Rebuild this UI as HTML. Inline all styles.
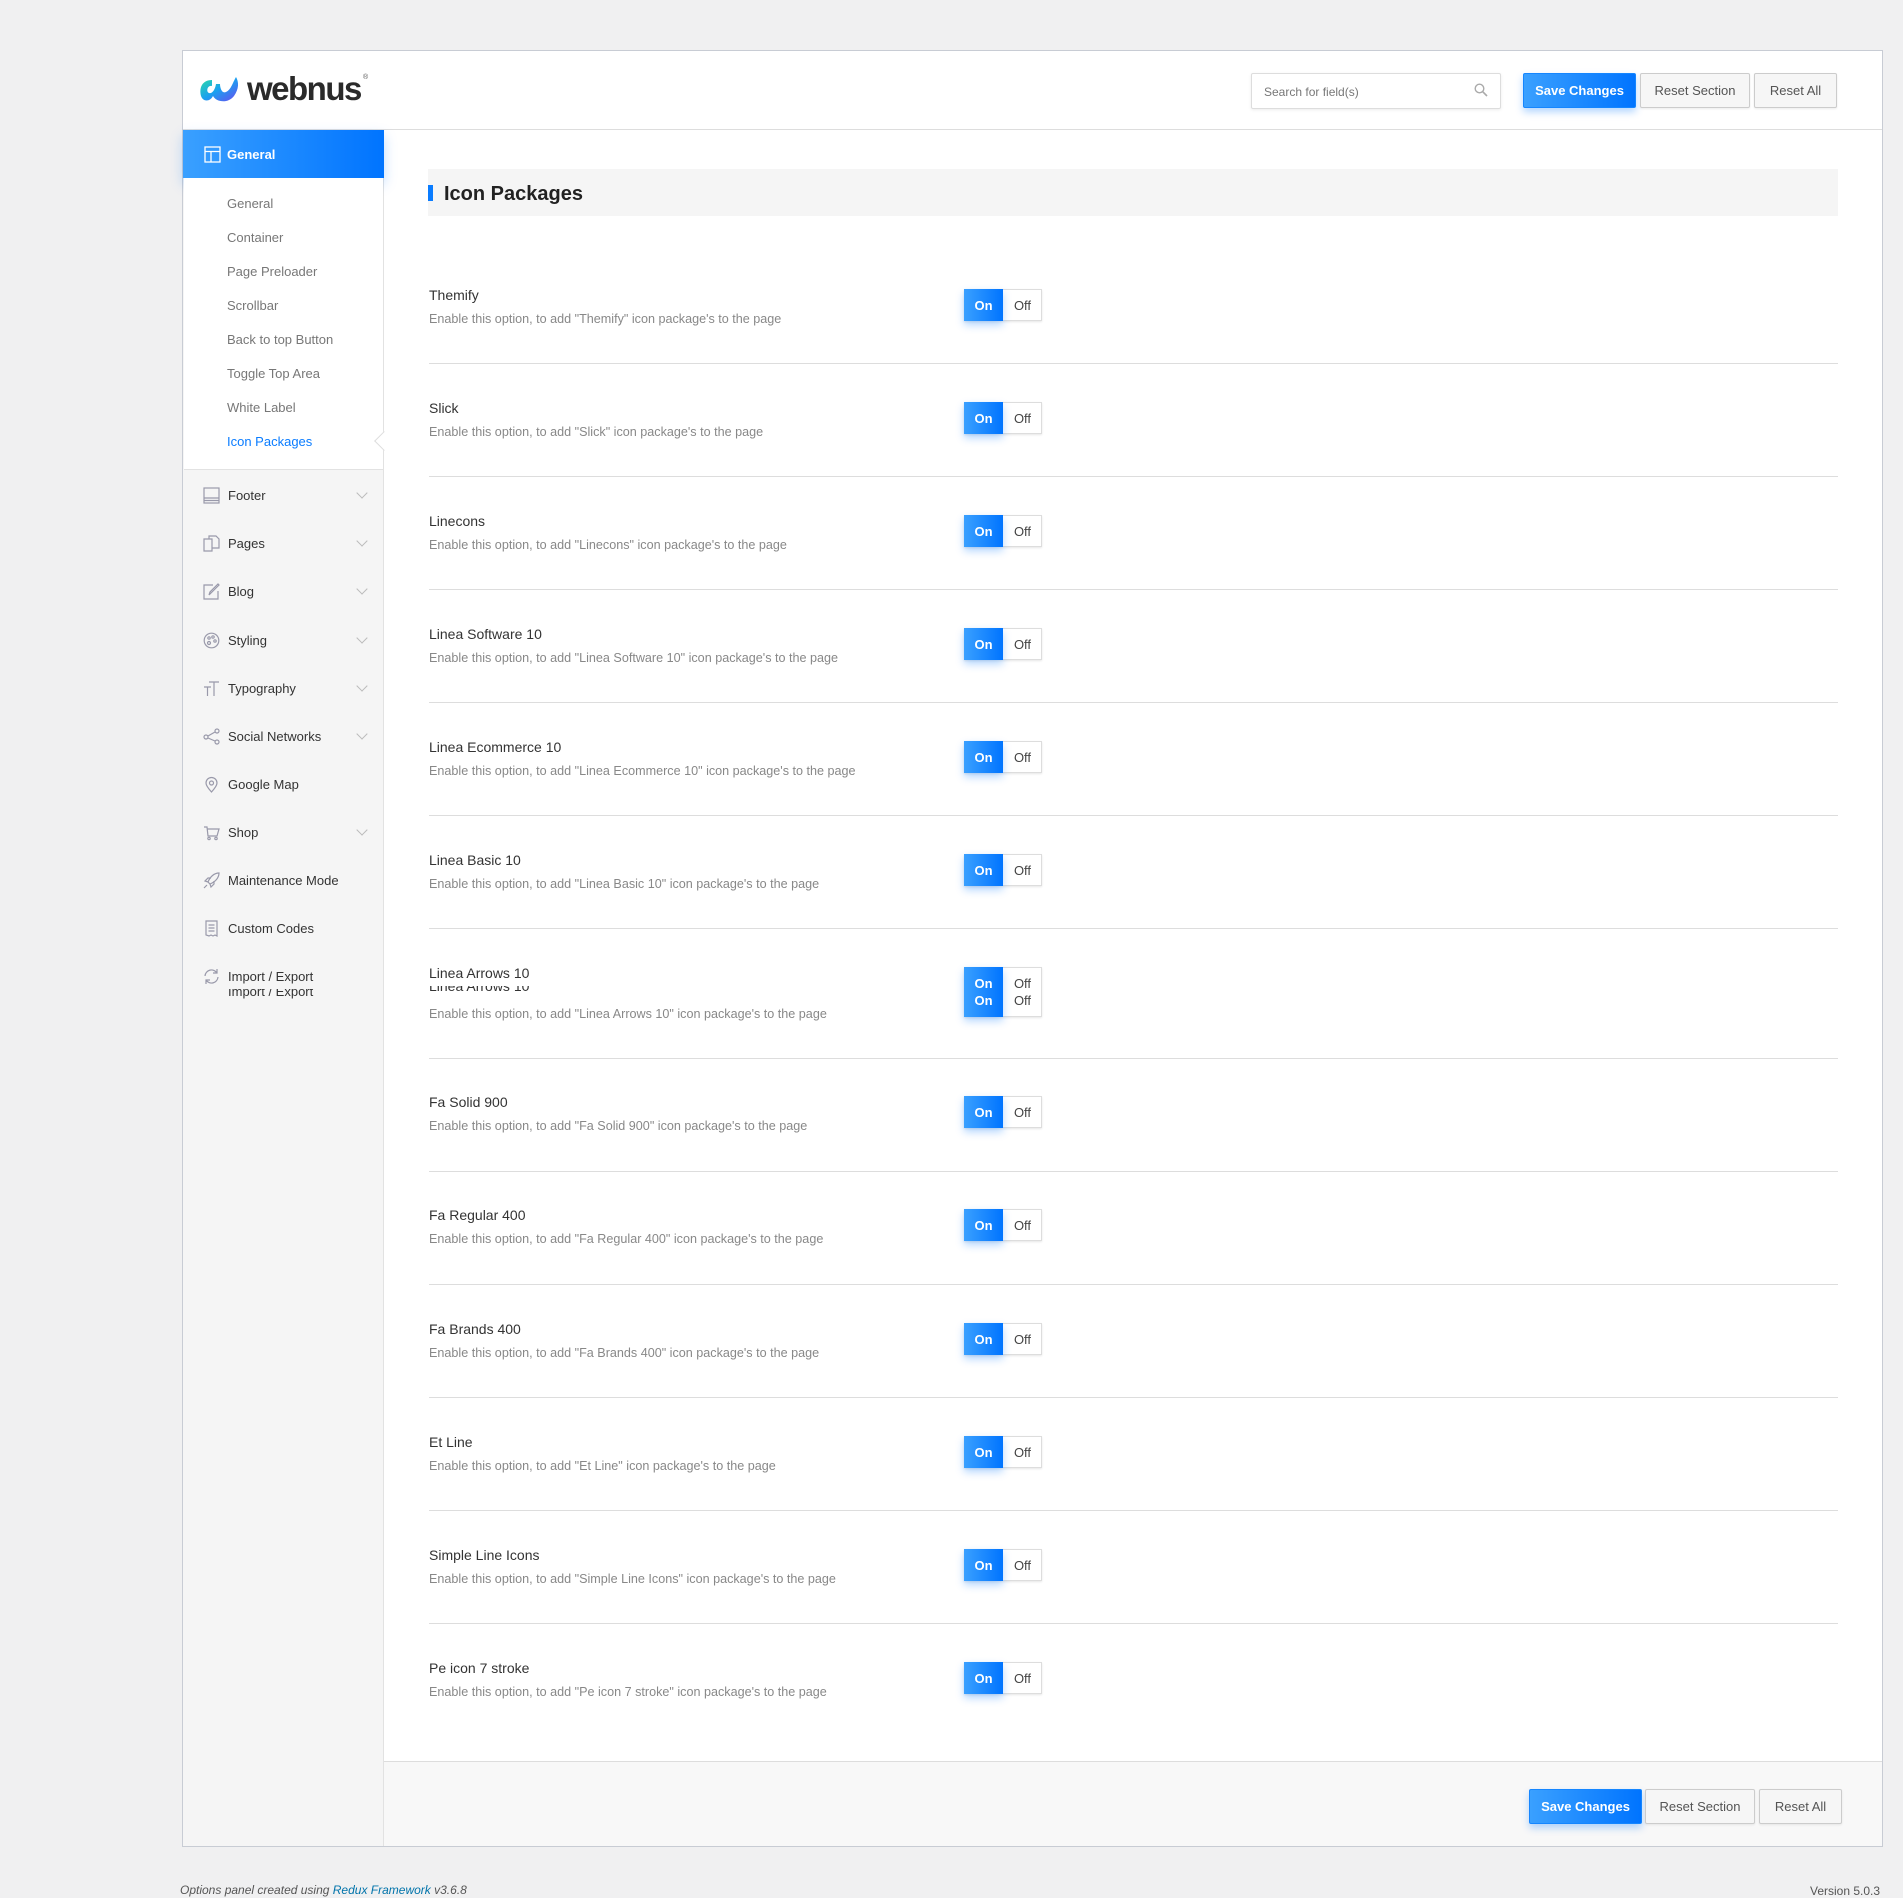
<!DOCTYPE html>
<html><head><meta charset="utf-8"><style>
*{box-sizing:border-box;margin:0;padding:0}
body{width:1903px;height:1894px;background:#f0f0f1;font-family:"Liberation Sans",sans-serif;position:relative;overflow:hidden;color:#23282d}
.abs{position:absolute}
#panel{left:182px;top:50px;width:1701px;height:1797px;background:#fff;border:1px solid #c8ccd4}
#hdr{left:183px;top:51px;width:1699px;height:79px;border-bottom:1px solid #ddd;background:#fff}
#side{left:183px;top:130px;width:201px;height:1716px;background:#f5f5f5;border-right:1px solid #e2e2e2}
.btn{position:absolute;height:35px;border:1px solid #ccc;background:#f6f6f6;border-radius:2px;font-size:13px;color:#555;display:flex;align-items:center;justify-content:center;box-shadow:0 1px 2px rgba(0,0,0,.08)}
.save{background:linear-gradient(90deg,#3aa0ff,#0074ff);border-color:#1586ff;color:#fff;font-weight:bold;box-shadow:0 4px 8px rgba(0,120,255,.3)}
.sub{position:absolute;left:227px;font-size:13px;color:#777}
.mi{position:absolute;left:203px;font-size:13px;color:#333;display:flex;align-items:center;height:20px}
.mi svg{width:17px;height:17px;margin-right:8px;stroke:#99a;fill:none;stroke-width:1.2}
.chev{position:absolute;left:358px;width:8px;height:8px;border-right:1.5px solid #bbb;border-bottom:1.5px solid #bbb;transform:rotate(45deg)}
.rt{position:absolute;left:429px;font-size:14px;color:#333}
.rd{position:absolute;left:429px;font-size:12.6px;color:#888}
.hr{position:absolute;left:429px;width:1409px;height:1px;background:#ddd}
.tg{position:absolute;left:964px;width:78px;height:32px;border:1px solid #ddd;background:#fff;font-size:13px;box-shadow:0 1px 2px rgba(0,0,0,.1)}
.tg .on{position:absolute;left:-1px;top:-1px;width:39px;height:32px;background:linear-gradient(90deg,#3aa0ff,#0074ff);color:#fff;font-weight:bold;display:flex;align-items:center;justify-content:center;box-shadow:0 4px 8px rgba(0,120,255,.3)}
.tg .off{position:absolute;left:38px;top:0;width:39px;height:30px;color:#444;display:flex;align-items:center;justify-content:center}
</style></head><body>
<div id="panel" class="abs"></div>
<div id="hdr" class="abs"></div>
<svg class="abs" style="left:198px;top:74px" width="44" height="30" viewBox="0 0 44 30">
<defs><linearGradient id="lg" x1="0" x2="1" y1="0" y2="1"><stop offset="0" stop-color="#2ee0a0"/><stop offset=".5" stop-color="#1aa0f0"/><stop offset="1" stop-color="#6a4cf0"/></linearGradient></defs>
<path d="M14 6 C4 6 1 14 3 22 C5 28 12 28 15 22 C18 28 30 30 36 22 C41 15 41 8 38 3 C35 8 33 16 28 18 C24 20 22 14 22 10 L18 10 C17 16 14 20 11 19 C8 18 9 11 14 12 Z" fill="url(#lg)"/>
</svg>
<div class="abs" style="left:247px;top:70px;font-size:33px;font-weight:bold;color:#2a2a2a;letter-spacing:-1.5px">webnus</div>
<div class="abs" style="left:363px;top:74px;font-size:7px;color:#555">®</div>
<div class="abs" style="left:1251px;top:73px;width:250px;height:36px;border:1px solid #ddd;border-radius:2px;box-shadow:0 1px 3px rgba(0,0,0,.08);font-size:12px;color:#777;padding:11px 12px">Search for field(s)</div>
<svg class="abs" style="left:1474px;top:83px" width="14" height="14" viewBox="0 0 14 14"><circle cx="5.5" cy="5.5" r="4.3" fill="none" stroke="#aaa" stroke-width="1.4"/><path d="M8.7 8.7L13 13" stroke="#aaa" stroke-width="1.6"/></svg>
<div class="btn save" style="left:1523px;top:73px;width:113px">Save Changes</div>
<div class="btn" style="left:1640px;top:73px;width:110px">Reset Section</div>
<div class="btn" style="left:1754px;top:73px;width:83px">Reset All</div>
<div id="side" class="abs"></div>
<div class="abs" style="left:183px;top:130px;width:201px;height:48px;background:linear-gradient(90deg,#3aa0ff,#0074ff);box-shadow:0 6px 12px rgba(0,120,255,.25);color:#fff;font-size:13px;font-weight:bold;display:flex;align-items:center;padding-left:21px">
<svg width="17" height="17" viewBox="0 0 17 17" style="margin-right:6px"><rect x="1" y="1" width="15" height="15" fill="none" stroke="#fff" stroke-width="1.3"/><path d="M1 5.5H16M7 5.5V16" stroke="#fff" stroke-width="1.3"/></svg>General</div>
<div class="abs" style="left:184px;top:178px;width:199px;height:292px;background:#fff;border-bottom:1px solid #e2e2e2"></div>
<div class="sub" style="top:196px">General</div>
<div class="sub" style="top:230px">Container</div>
<div class="sub" style="top:264px">Page Preloader</div>
<div class="sub" style="top:298px">Scrollbar</div>
<div class="sub" style="top:332px">Back to top Button</div>
<div class="sub" style="top:366px">Toggle Top Area</div>
<div class="sub" style="top:400px">White Label</div>
<div class="sub" style="top:434px;color:#0a7cff">Icon Packages</div>
<div class="abs" style="left:377px;top:434px;width:14px;height:14px;background:#fff;border-left:1px solid #ddd;border-bottom:1px solid #ddd;transform:rotate(45deg)"></div>

<div class="mi" style="top:485px"><svg viewBox="0 0 17 17"><rect x="1" y="1" width="15" height="15"/><path d="M1 11H16M1 13.5H16"/></svg>Footer</div><div class="chev" style="top:489px"></div>
<div class="mi" style="top:533px"><svg viewBox="0 0 17 17"><path d="M1 4H9V16H1ZM6 4V1H13L16 4V13H9"/></svg>Pages</div><div class="chev" style="top:537px"></div>
<div class="mi" style="top:581px"><svg viewBox="0 0 17 17"><path d="M10 2H1V16H15V8M6 12L7 9L15 1L16 2L8 10Z"/></svg>Blog</div><div class="chev" style="top:585px"></div>
<div class="mi" style="top:630px"><svg viewBox="0 0 17 17"><circle cx="8.5" cy="8.5" r="7.3"/><circle cx="6" cy="6" r="1.2"/><circle cx="10" cy="5" r="1.2"/><circle cx="12" cy="9" r="1.2"/><circle cx="6" cy="11" r="1.5"/></svg>Styling</div><div class="chev" style="top:634px"></div>
<div class="mi" style="top:678px"><svg viewBox="0 0 17 17"><path d="M1 7H8M4.5 7V16M6 2H16M11 2V16"/></svg>Typography</div><div class="chev" style="top:682px"></div>
<div class="mi" style="top:726px"><svg viewBox="0 0 17 17"><circle cx="3" cy="9" r="2"/><circle cx="14" cy="3" r="2"/><circle cx="14" cy="14" r="2"/><path d="M5 8L12 4M5 10L12 13"/></svg>Social Networks</div><div class="chev" style="top:730px"></div>
<div class="mi" style="top:774px"><svg viewBox="0 0 17 17"><path d="M8.5 16C4 11 3 9 3 7A5.5 5.5 0 0 1 14 7C14 9 13 11 8.5 16Z"/><circle cx="8.5" cy="7" r="2"/></svg>Google Map</div>
<div class="mi" style="top:822px"><svg viewBox="0 0 17 17"><path d="M1 3H4L5 12H14L16 5H4.5"/><circle cx="6" cy="14.5" r="1.2"/><circle cx="13" cy="14.5" r="1.2"/></svg>Shop</div><div class="chev" style="top:826px"></div>
<div class="mi" style="top:870px"><svg viewBox="0 0 17 17"><path d="M16 1C11 1 7 5 5 10L7 12C12 10 16 6 16 1ZM5 10L2 9L5 6H8M7 12L8 15L11 12V9M4 13L1 16"/></svg>Maintenance Mode</div>
<div class="mi" style="top:918px"><svg viewBox="0 0 17 17"><path d="M3 1H14V16L12 15L10 16L8 15L6 16L3 15ZM5.5 5H11.5M5.5 8H11.5M5.5 11H11.5"/></svg>Custom Codes</div>
<div class="mi" style="top:966px"><svg viewBox="0 0 17 17"><path d="M2 8A6.5 6.5 0 0 1 14 5M14 1V5H10M15 9A6.5 6.5 0 0 1 3 12M3 16V12H7"/></svg>Import / Export</div>
<div class="abs" style="left:203px;top:989px;height:12px;overflow:hidden;font-size:13px;color:#333;width:140px"><div style="position:relative;top:-5px;padding-left:25px">Import / Export</div></div>

<div class="abs" style="left:428px;top:169px;width:1410px;height:47px;background:#f5f5f5"></div>
<div class="abs" style="left:428px;top:185px;width:5px;height:16px;background:#0a7cff"></div>
<div class="abs" style="left:444px;top:183px;font-size:20px;font-weight:bold;color:#222">Icon Packages</div>

<div class="rt" style="top:287px">Themify</div><div class="rd" style="top:312px">Enable this option, to add "Themify" icon package's to the page</div><div class="tg" style="top:289px"><div class="on">On</div><div class="off">Off</div></div><div class="hr" style="top:363px"></div>
<div class="rt" style="top:400px">Slick</div><div class="rd" style="top:425px">Enable this option, to add "Slick" icon package's to the page</div><div class="tg" style="top:402px"><div class="on">On</div><div class="off">Off</div></div><div class="hr" style="top:476px"></div>
<div class="rt" style="top:513px">Linecons</div><div class="rd" style="top:538px">Enable this option, to add "Linecons" icon package's to the page</div><div class="tg" style="top:515px"><div class="on">On</div><div class="off">Off</div></div><div class="hr" style="top:589px"></div>
<div class="rt" style="top:626px">Linea Software 10</div><div class="rd" style="top:651px">Enable this option, to add "Linea Software 10" icon package's to the page</div><div class="tg" style="top:628px"><div class="on">On</div><div class="off">Off</div></div><div class="hr" style="top:702px"></div>
<div class="rt" style="top:739px">Linea Ecommerce 10</div><div class="rd" style="top:764px">Enable this option, to add "Linea Ecommerce 10" icon package's to the page</div><div class="tg" style="top:741px"><div class="on">On</div><div class="off">Off</div></div><div class="hr" style="top:815px"></div>
<div class="rt" style="top:852px">Linea Basic 10</div><div class="rd" style="top:877px">Enable this option, to add "Linea Basic 10" icon package's to the page</div><div class="tg" style="top:854px"><div class="on">On</div><div class="off">Off</div></div><div class="hr" style="top:928px"></div>
<div class="rt" style="top:965px">Linea Arrows 10</div>
<div class="rt" style="top:986px;height:10px;overflow:hidden;line-height:12px"><span style="position:relative;top:-6px">Linea Arrows 10</span></div>
<div class="rd" style="top:1007px">Enable this option, to add "Linea Arrows 10" icon package's to the page</div>
<div class="tg" style="top:967px;height:50px"><div class="on" style="height:50px;flex-direction:column;line-height:17px">On<br>On</div><div class="off" style="height:48px;flex-direction:column;line-height:17px">Off<br>Off</div></div><div class="hr" style="top:1058px"></div>
<div class="rt" style="top:1094px">Fa Solid 900</div><div class="rd" style="top:1119px">Enable this option, to add "Fa Solid 900" icon package's to the page</div><div class="tg" style="top:1096px"><div class="on">On</div><div class="off">Off</div></div><div class="hr" style="top:1171px"></div>
<div class="rt" style="top:1207px">Fa Regular 400</div><div class="rd" style="top:1232px">Enable this option, to add "Fa Regular 400" icon package's to the page</div><div class="tg" style="top:1209px"><div class="on">On</div><div class="off">Off</div></div><div class="hr" style="top:1284px"></div>
<div class="rt" style="top:1321px">Fa Brands 400</div><div class="rd" style="top:1346px">Enable this option, to add "Fa Brands 400" icon package's to the page</div><div class="tg" style="top:1323px"><div class="on">On</div><div class="off">Off</div></div><div class="hr" style="top:1397px"></div>
<div class="rt" style="top:1434px">Et Line</div><div class="rd" style="top:1459px">Enable this option, to add "Et Line" icon package's to the page</div><div class="tg" style="top:1436px"><div class="on">On</div><div class="off">Off</div></div><div class="hr" style="top:1510px"></div>
<div class="rt" style="top:1547px">Simple Line Icons</div><div class="rd" style="top:1572px">Enable this option, to add "Simple Line Icons" icon package's to the page</div><div class="tg" style="top:1549px"><div class="on">On</div><div class="off">Off</div></div><div class="hr" style="top:1623px"></div>
<div class="rt" style="top:1660px">Pe icon 7 stroke</div><div class="rd" style="top:1685px">Enable this option, to add "Pe icon 7 stroke" icon package's to the page</div><div class="tg" style="top:1662px"><div class="on">On</div><div class="off">Off</div></div>

<div class="abs" style="left:384px;top:1761px;width:1498px;height:85px;background:#f8f8f8;border-top:1px solid #ddd"></div>
<div class="btn save" style="left:1529px;top:1789px;width:113px">Save Changes</div>
<div class="btn" style="left:1645px;top:1789px;width:110px">Reset Section</div>
<div class="btn" style="left:1759px;top:1789px;width:83px">Reset All</div>

<div class="abs" style="left:180px;top:1883px;font-size:12px;font-style:italic;color:#555">Options panel created using <span style="color:#0073aa">Redux Framework</span> v3.6.8</div>
<div class="abs" style="left:1810px;top:1884px;font-size:12px;color:#555">Version 5.0.3</div>
</body></html>
